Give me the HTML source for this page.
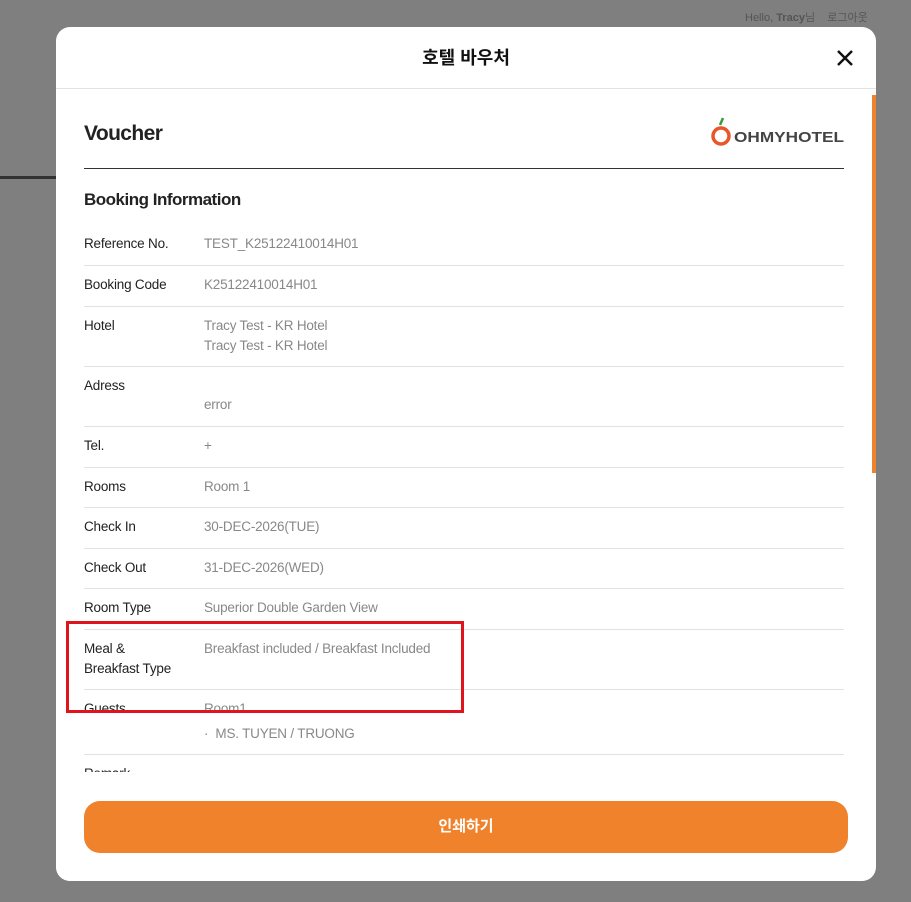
<!DOCTYPE html>
<html><head><meta charset="utf-8"><style>
*{margin:0;padding:0;box-sizing:border-box}
body{width:911px;height:902px;background:#7f7f7f;position:relative;overflow:hidden;font-family:"Liberation Sans","Noto Sans CJK KR",sans-serif}
.modal{position:absolute;left:56px;top:27px;width:820px;height:854px;background:#fff;border-radius:14px;overflow:hidden}
.hd{position:absolute;left:0;top:0;width:820px;height:62px;border-bottom:1px solid #e2e2e2;text-align:center;line-height:62px;font-size:18px;font-weight:bold;color:#111}
.x{position:absolute;right:22px;top:22px;width:18px;height:18px}
.t{position:absolute;font-size:13.5px;color:#222;line-height:20px;letter-spacing:-0.2px}
.v{position:absolute;font-size:13.5px;color:#888;line-height:20px;letter-spacing:-0.2px}
.ln{position:absolute;left:28px;width:760px;height:1px;background:#e2e2e2}
.btn{position:absolute;left:28px;top:774px;width:764px;height:52px;background:#ef822b;border-radius:16px;color:#fff;font-weight:bold;font-size:15px;text-align:center;line-height:52px}
.sb{position:absolute;left:816px;top:68px;width:4px;height:378px;background:#ef822b}
.red{position:absolute;left:66px;top:621px;width:398px;height:92px;border:3px solid #e0141c}
</style></head><body>
<div style="position:absolute;left:0;top:176px;width:56px;height:3px;background:#333"></div>
<div style="position:absolute;left:745px;top:9px;font-size:11px;color:#555">Hello, <b>Tracy</b>님 &nbsp;&nbsp; 로그아웃</div>
<div class="modal">
<div class="hd">호텔 바우처</div>
<svg class="x" viewBox="0 0 18 18"><path d="M2 2L16 16M16 2L2 16" stroke="#111" stroke-width="2.4"/></svg>
<div class="t" style="left:28px;top:94px;font-size:21px;font-weight:bold;line-height:26px;letter-spacing:-0.6px">Voucher</div>
<svg style="position:absolute;left:654px;top:88px" width="136" height="34" viewBox="0 0 136 34">
<path d="M13 3 L10 10" stroke="#3a9a3a" stroke-width="2.5"/>
<circle cx="11" cy="21" r="8" fill="none" stroke="#e8562a" stroke-width="3.5"/>
<text x="24" y="27" font-family="Liberation Sans" font-weight="bold" font-size="15" fill="#444" textLength="110" lengthAdjust="spacingAndGlyphs">OHMYHOTEL</text>
</svg>
<div style="position:absolute;left:28px;top:141px;width:760px;height:1px;background:#333"></div>
<div class="t" style="left:28px;top:162px;font-size:17px;font-weight:bold;line-height:22px;letter-spacing:-0.5px">Booking Information</div>

<div class="t" style="left:28px;top:207px">Reference No.</div><div class="v" style="left:148px;top:207px">TEST_K25122410014H01</div>
<div class="ln" style="top:238px"></div>
<div class="t" style="left:28px;top:248px">Booking Code</div><div class="v" style="left:148px;top:248px">K25122410014H01</div>
<div class="ln" style="top:279px"></div>
<div class="t" style="left:28px;top:289px">Hotel</div><div class="v" style="left:148px;top:289px">Tracy Test - KR Hotel<br>Tracy Test - KR Hotel</div>
<div class="ln" style="top:339px"></div>
<div class="t" style="left:28px;top:349px">Adress</div><div class="v" style="left:148px;top:368px">error</div>
<div class="ln" style="top:399px"></div>
<div class="t" style="left:28px;top:409px">Tel.</div><div class="v" style="left:148px;top:409px">+</div>
<div class="ln" style="top:440px"></div>
<div class="t" style="left:28px;top:450px">Rooms</div><div class="v" style="left:148px;top:450px">Room 1</div>
<div class="ln" style="top:480px"></div>
<div class="t" style="left:28px;top:490px">Check In</div><div class="v" style="left:148px;top:490px">30-DEC-2026(TUE)</div>
<div class="ln" style="top:521px"></div>
<div class="t" style="left:28px;top:531px">Check Out</div><div class="v" style="left:148px;top:531px">31-DEC-2026(WED)</div>
<div class="ln" style="top:561px"></div>
<div class="t" style="left:28px;top:571px">Room Type</div><div class="v" style="left:148px;top:571px">Superior Double Garden View</div>
<div class="ln" style="top:602px"></div>
<div class="t" style="left:28px;top:612px">Meal &amp;<br>Breakfast Type</div><div class="v" style="left:148px;top:612px">Breakfast included / Breakfast Included</div>
<div class="ln" style="top:662px"></div>
<div class="t" style="left:28px;top:672px">Guests</div><div class="v" style="left:148px;top:672px">Room1</div>
<div class="v" style="left:148px;top:697px">·&nbsp; MS. TUYEN / TRUONG</div>
<div class="ln" style="top:727px"></div>
<div class="t" style="left:28px;top:737px">Remark</div>
<div style="position:absolute;left:0;top:745px;width:816px;height:109px;background:#fff"></div>
<div class="sb"></div>
<div class="btn">인쇄하기</div>
</div>
<div class="red"></div>
</body></html>
